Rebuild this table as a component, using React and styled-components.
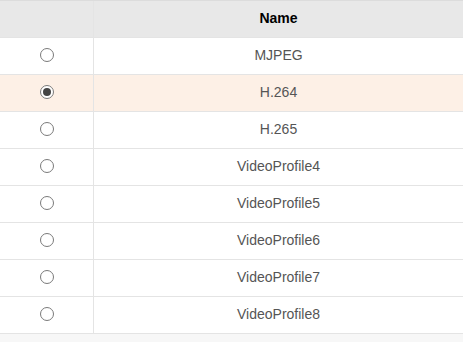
import React, { useState } from "react";
import styled, { createGlobalStyle } from "styled-components";

const GlobalStyle = createGlobalStyle`
    body {
        margin: 0;
        background: #f7f7f7;
        font-family: "Liberation Sans", Arial, sans-serif;
    }
`;

const Table = styled.div`
    width: 463px;
    border-top: 1px solid #dcdcdc;
    background: #fff;
`;

const Row = styled.div`
    display: grid;
    grid-template-columns: 93px 1fr;
    height: 36px;
    border-bottom: 1px solid #e4e4e4;
    background: ${({ $head, $active }) => ($head ? "#e8e8e8" : $active ? "#fdf0e6" : "#fff")};
`;

const Cell = styled.div`
    display: flex;
    align-items: center;
    justify-content: center;
    padding-bottom: 2px;
    font-size: 14px;
    color: ${({ $head }) => ($head ? "#000" : "#555")};
    font-weight: ${({ $head }) => ($head ? "bold" : "normal")};

    & + & {
        border-left: 1px solid #e4e4e4;
    }
`;

const Radio = styled.span`
    box-sizing: border-box;
    width: 14px;
    height: 14px;
    border-radius: 50%;
    border: 1px solid #7a7a7a;
    background: #fff;
    display: flex;
    align-items: center;
    justify-content: center;

    &::after {
        content: "";
        width: 8px;
        height: 8px;
        border-radius: 50%;
        background: ${({ $checked }) => ($checked ? "#444" : "transparent")};
    }
`;

const profiles = [
    "MJPEG",
    "H.264",
    "H.265",
    "VideoProfile4",
    "VideoProfile5",
    "VideoProfile6",
    "VideoProfile7",
    "VideoProfile8",
];

export default function App() {
    const [selected, setSelected] = useState(1);

    return (
        <>
            <GlobalStyle />
            <Table>
                <Row $head>
                    <Cell $head />
                    <Cell $head>Name</Cell>
                </Row>
                {profiles.map((name, i) => (
                    <Row key={name} $active={i === selected} onClick={() => setSelected(i)}>
                        <Cell>
                            <Radio $checked={i === selected} />
                        </Cell>
                        <Cell>{name}</Cell>
                    </Row>
                ))}
            </Table>
        </>
    );
}
